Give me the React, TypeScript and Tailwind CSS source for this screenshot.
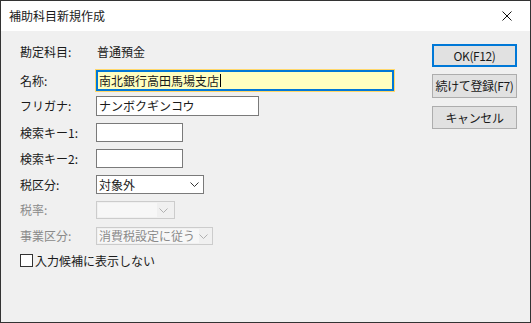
import React from "react";

const font = { fontFamily: '"Noto Sans CJK JP", "Noto Sans", sans-serif' };

function Chevron({ color = "#333" }: { color?: string }) {
  return (
    <svg width="9" height="5" viewBox="0 0 9 5" className="shrink-0">
      <path d="M0.5 0.5 L4.5 4.5 L8.5 0.5" fill="none" stroke={color} strokeWidth="1" />
    </svg>
  );
}

function Row({
  label,
  disabled,
  className,
  children,
}: {
  label: string;
  disabled?: boolean;
  className: string;
  children: React.ReactNode;
}) {
  return (
    <div className={`flex items-center ${className}`}>
      <span className={`w-[76px] shrink-0 ${disabled ? "text-[#8a8a8a]" : "text-[#1a1a1a]"}`}>{label}</span>
      {children}
    </div>
  );
}

function Button({ label, primary, className }: { label: string; primary?: boolean; className: string }) {
  return (
    <div
      className={`flex w-[85px] items-center justify-center whitespace-nowrap bg-[#e1e1e1] tracking-[-0.4px] text-[#1a1a1a] ${
        primary ? "border-2 border-[#0078d7]" : "border border-[#adadad]"
      } ${className}`}
    >
      {label}
    </div>
  );
}

export default function App() {
  return (
    <div
      className="flex h-[323px] w-[531px] flex-col border border-[#333] bg-[#f0f0f0] text-[12px] leading-none text-[#1a1a1a]"
      style={font}
    >
      {/* title bar */}
      <div className="flex h-[30px] shrink-0 items-center justify-between bg-white pl-[8px] pr-[18px]">
        <span>補助科目新規作成</span>
        <svg width="10" height="10" viewBox="0 0 10 10">
          <path d="M0.5 0.5 L9.5 9.5 M9.5 0.5 L0.5 9.5" stroke="#111" strokeWidth="1" />
        </svg>
      </div>

      <div className="flex flex-1 pl-[19px] pt-[13px]">
        {/* form */}
        <div className="flex w-[412px] flex-col">
          <Row label="勘定科目:" className="h-[16px]">
            <span className="pl-[1px]">普通預金</span>
          </Row>

          <Row label="名称:" className="mt-[10px] h-[21px]">
            <div className="flex h-[21px] w-[298px] items-center border-2 border-[#0078d7] bg-[#ffffc0] pl-[1px] outline outline-1 outline-[#ffd76a]">
              <span>南北銀行高田馬場支店</span>
              <span className="ml-[1px] h-[13px] w-px bg-black" />
            </div>
          </Row>

          <Row label="フリガナ:" className="mt-[5px] h-[20px]">
            <div className="flex h-[20px] w-[163px] items-center border border-[#7a7a7a] bg-white pl-[2px]">
              ナンボクギンコウ
            </div>
          </Row>

          <Row label="検索キー1:" className="mt-[7px] h-[19px]">
            <div className="h-[19px] w-[87px] border border-[#7a7a7a] bg-white" />
          </Row>

          <Row label="検索キー2:" className="mt-[7px] h-[19px]">
            <div className="h-[19px] w-[87px] border border-[#7a7a7a] bg-white" />
          </Row>

          <Row label="税区分:" className="mt-[7px] h-[19px]">
            <div className="flex h-[19px] w-[108px] items-center justify-between border border-[#7a7a7a] bg-white pl-[2px] pr-[4px]">
              <span>対象外</span>
              <Chevron />
            </div>
          </Row>

          <Row label="税率:" disabled className="mt-[7px] h-[18px]">
            <div className="flex h-[18px] w-[79px] items-center border border-[#cccccc] bg-[#f0f0f0] p-[1px] pr-[6px]">
              <div className="h-full w-[59px] bg-[#f7f7f7]" />
              <span className="ml-auto">
                <Chevron color="#b0b0b0" />
              </span>
            </div>
          </Row>

          <Row label="事業区分:" disabled className="mt-[8px] h-[18px]">
            <div className="flex h-[18px] w-[117px] items-center border border-[#cccccc] bg-[#f0f0f0] p-[1px] pr-[4px]">
              <div className="flex h-full w-[101px] shrink-0 items-center whitespace-nowrap bg-[#f7f7f7] pl-[1px] text-[#8a8a8a]">
                消費税設定に従う
              </div>
              <span className="ml-auto">
                <Chevron color="#b0b0b0" />
              </span>
            </div>
          </Row>

          <div className="mt-[9px] flex h-[13px] items-center">
            <div className="h-[13px] w-[13px] shrink-0 border border-[#333] bg-white" />
            <span className="ml-[2px]">入力候補に表示しない</span>
          </div>
        </div>

        {/* buttons */}
        <div className="flex flex-col">
          <Button label="OK(F12)" primary className="h-[23px]" />
          <Button label="続けて登録(F7)" className="mt-[7px] h-[24px]" />
          <Button label="キャンセル" className="mt-[8px] h-[23px]" />
        </div>
      </div>
    </div>
  );
}
